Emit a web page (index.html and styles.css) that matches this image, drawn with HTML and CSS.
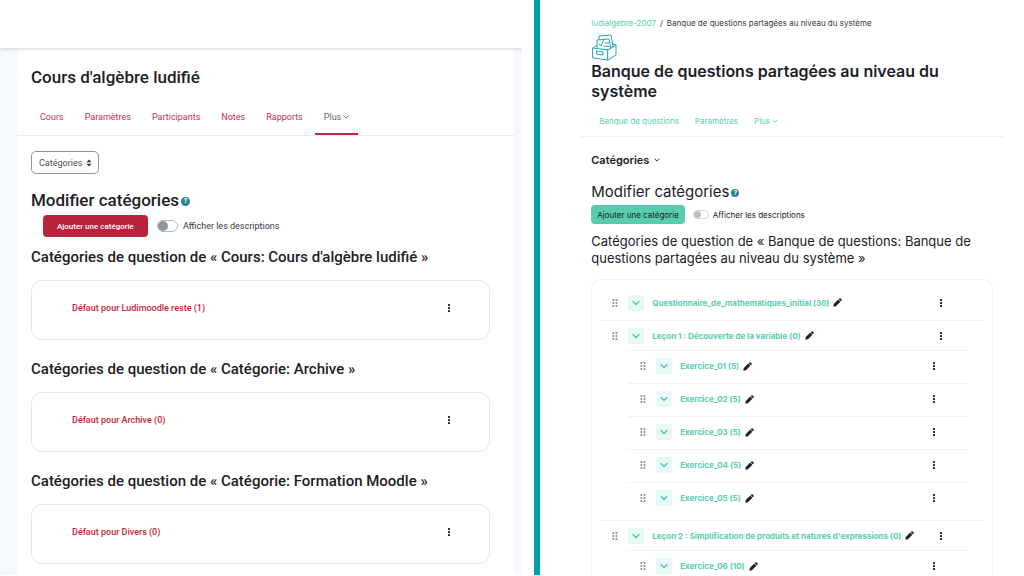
FILE: index.html
```html
<!DOCTYPE html>
<html lang="fr">
<head>
    <meta charset="UTF-8">
    <meta name="viewport" content="width=device-width, initial-scale=1.0">
    <title>Banque de questions</title>
    <link rel="stylesheet" href="styles.css">
</head>
<body>
    <!-- Shared icons -->
    <svg class="sprite" aria-hidden="true">
        <symbol id="kebab" viewBox="0 0 4 10">
            <rect x="1" y="1" width="2" height="2" rx="0.5"/>
            <rect x="1" y="4" width="2" height="2" rx="0.5"/>
            <rect x="1" y="7" width="2" height="2" rx="0.5"/>
        </symbol>
        <symbol id="grip" viewBox="0 0 6 8">
            <circle cx="1.3" cy="1" r="1"/><circle cx="4.5" cy="1" r="1"/>
            <circle cx="1.3" cy="4" r="1"/><circle cx="4.5" cy="4" r="1"/>
            <circle cx="1.3" cy="7" r="1"/><circle cx="4.5" cy="7" r="1"/>
        </symbol>
        <symbol id="chevron" viewBox="0 0 8 8">
            <path d="M1 2.5L4 5.5L7 2.5" fill="none" stroke="currentColor" stroke-width="1.2" stroke-linecap="round" stroke-linejoin="round"/>
        </symbol>
        <symbol id="pencil" viewBox="0 0 9 9">
            <path d="M0.3 8.7L0.8 6.1L5.3 1.6L7.4 3.7L2.9 8.2z"/>
            <path d="M5.7 1.2L6.5 0.4Q7.1 0 7.7 0.5L8.5 1.3Q9 1.9 8.6 2.5L7.8 3.3z"/>
        </symbol>
        <symbol id="sort" viewBox="0 0 6 8">
            <path d="M3 0.5L5.6 3.3H0.4zM3 7.5L0.4 4.7H5.6z"/>
        </symbol>
    </svg>

    <section class="site site-red">
        <div class="navbar"></div>
        <main class="page">
            <h1>Cours d'algèbre ludifié</h1>
            <nav class="tabs">
                <a href="#">Cours</a>
                <a href="#">Paramètres</a>
                <a href="#">Participants</a>
                <a href="#">Notes</a>
                <a href="#">Rapports</a>
                <a href="#" class="active">Plus <svg class="caret"><use href="#chevron"/></svg></a>
            </nav>
            <div class="content">
                <div class="picker">
                    <select aria-label="Navigation">
                        <option>Catégories</option>
                    </select>
                    <svg class="sort"><use href="#sort"/></svg>
                </div>
                <h2>Modifier catégories<button type="button" class="help" aria-label="Aide">?</button></h2>
                <div class="actions">
                    <button type="button" class="add">Ajouter une catégorie</button>
                    <label class="switch"><input type="checkbox">Afficher les descriptions</label>
                </div>

                <h3>Catégories de question de « Cours: Cours d'algèbre ludifié »</h3>
                <div class="card">
                    <a href="#">Défaut pour Ludimoodle reste (1)</a>
                    <button type="button" class="menu" aria-label="Menu"><svg><use href="#kebab"/></svg></button>
                </div>

                <h3>Catégories de question de « Catégorie: Archive »</h3>
                <div class="card">
                    <a href="#">Défaut pour Archive (0)</a>
                    <button type="button" class="menu" aria-label="Menu"><svg><use href="#kebab"/></svg></button>
                </div>

                <h3>Catégories de question de « Catégorie: Formation Moodle »</h3>
                <div class="card">
                    <a href="#">Défaut pour Divers (0)</a>
                    <button type="button" class="menu" aria-label="Menu"><svg><use href="#kebab"/></svg></button>
                </div>
            </div>
        </main>
    </section>

    <div class="divider"></div>

    <section class="site site-green">
        <header>
            <nav class="breadcrumb">
                <a href="#">ludialgebre-2007</a><span>/</span><span>Banque de questions partagées au niveau du système</span>
            </nav>
            <svg class="box-icon" viewBox="0 0 26 28">
                <g fill="#fff" stroke="#26a5b8" stroke-linejoin="round" stroke-linecap="round">
                    <path d="M8 12V3L20 2L22 12L20 18H8z"/>
                    <path d="M6 16V7L18 6L20 16z"/>
                    <path d="M2 15L17 17V27L2 25z"/>
                    <path d="M17 17L25 12V22L17 27z"/>
                    <path d="M2 15L6 12M22 11L25 12" fill="none"/>
                    <path d="M6 18L12 19V22L6 21z"/>
                    <path d="M8 11L10 13L13 6M14 10H18M13 13L18 13.500" fill="none"/>
                </g>
            </svg>
            <h1>Banque de questions partagées au niveau du système</h1>
        </header>
        <nav class="tabs">
            <a href="#">Banque de questions</a>
            <a href="#">Paramètres</a>
            <a href="#">Plus <svg class="caret"><use href="#chevron"/></svg></a>
        </nav>
        <main class="content">
            <div class="picker">
                <select aria-label="Navigation">
                    <option>Catégories</option>
                </select>
                <svg class="caret"><use href="#chevron"/></svg>
            </div>
            <h2>Modifier catégories<button type="button" class="help" aria-label="Aide">?</button></h2>
            <div class="actions">
                <button type="button" class="add">Ajouter une catégorie</button>
                <label class="switch"><input type="checkbox">Afficher les descriptions</label>
            </div>
            <h3>Catégories de question de « Banque de questions: Banque de questions partagées au niveau du système »</h3>
            <ul class="tree" id="tree"></ul>
        </main>
    </section>

    <script>
        const categories = [
            { name: 'Questionnaire_de_mathematiques_initial (36)' },
            { name: 'Leçon 1 : Découverte de la variable (0)', children: [
                { name: 'Exercice_01 (5)' },
                { name: 'Exercice_02 (5)' },
                { name: 'Exercice_03 (5)' },
                { name: 'Exercice_04 (5)' },
                { name: 'Exercice_05 (5)' }
            ] },
            { name: "Leçon 2 : Simplification de produits et natures d'expressions (0)", children: [
                { name: 'Exercice_06 (10)' }
            ] }
        ];

        // Build one level of the category tree
        function renderItems(items) {
            return items.map(item => `
                <li>
                    <div class="row">
                        <svg class="grip"><use href="#grip"/></svg>
                        <button type="button" class="toggle" aria-label="Déplier"><svg><use href="#chevron"/></svg></button>
                        <a href="#">${item.name}</a>
                        <button type="button" class="edit" aria-label="Modifier"><svg><use href="#pencil"/></svg></button>
                        <button type="button" class="menu" aria-label="Menu"><svg><use href="#kebab"/></svg></button>
                    </div>
                    ${item.children ? `<ul>${renderItems(item.children)}</ul>` : ''}
                </li>`).join('');
        }

        document.getElementById('tree').innerHTML = renderItems(categories);
    </script>
</body>
</html>
```
FILE: styles.css
```css
* {
    box-sizing: border-box;
}

body {
    display: flex;
    height: 100vh;
    margin: 0;
    overflow: hidden;
    background: #fff;
    color: #1d2125;
}

h1, h2, h3, ul {
    margin: 0;
    padding: 0;
}

a {
    text-decoration: none;
}

button, select {
    font: inherit;
    color: inherit;
    border: none;
    background: none;
    padding: 0;
    margin: 0;
    cursor: pointer;
}

svg {
    display: block;
    fill: currentColor;
}

.sprite {
    position: absolute;
    width: 0;
    height: 0;
}

.caret {
    display: inline-block;
    width: 6px;
    height: 6px;
}

.tabs {
    display: flex;
}

.picker {
    display: inline-flex;
    align-items: center;
}

.picker select {
    appearance: none;
}

.help {
    display: inline-flex;
    align-items: center;
    justify-content: center;
    border-radius: 50%;
    background: #2f8193;
    color: #fff;
    font-weight: bold;
    vertical-align: middle;
}

.actions, .switch {
    display: flex;
    align-items: center;
}

.switch input {
    appearance: none;
    margin: 0;
    border: 1px solid #b4b9c1;
    border-radius: 6px;
    background: #fff;
}

.switch input::before {
    content: "";
    display: block;
    height: 100%;
    aspect-ratio: 1;
    border-radius: 50%;
    background: #8f959e;
}

.switch input:checked::before {
    margin-left: auto;
}

.menu svg {
    width: 4px;
    height: 10px;
}

.divider {
    flex: none;
    width: 6px;
    margin: 0 0 1px 12px;
    background: #009cb0;
}

/* Left site */
.site-red {
    flex: none;
    width: 51%;
    margin-bottom: 1px;
    overflow: hidden;
    background: #f5f8fd;
    font-family: Roboto, "Liberation Sans", sans-serif;
    font-size: 9px;
}

.site-red .navbar {
    position: relative;
    height: 48px;
    background: #fff;
    box-shadow: 0 1px 4px rgba(0, 0, 0, 0.16);
}

.site-red .page {
    min-height: 100%;
    margin: 0 8px 0 17px;
    padding-top: 18px;
    background: #fff;
}

.site-red h1 {
    padding-left: 14px;
    font-size: 17px;
    line-height: 22px;
    font-weight: 500;
}

.site-red .tabs {
    gap: 3px;
    margin-top: 12px;
    padding-left: 14px;
    border-bottom: 1px solid #e9ecef;
}

.site-red .tabs a {
    padding: 10px 9px 8px;
    border-bottom: 2px solid transparent;
    color: #c92f4b;
    line-height: 15px;
}

.site-red .tabs .active {
    border-color: #c52540;
    color: #5f666d;
}

.site-red .content {
    padding: 15px 24px 0 14px;
}

.site-red .picker {
    height: 23px;
    padding: 0 6px 0 7px;
    gap: 3px;
    border: 1px solid #8f959e;
    border-radius: 5px;
    color: #495057;
}

.site-red .sort {
    width: 6px;
    height: 8px;
    color: #343a40;
}

.site-red h2 {
    margin-top: 14px;
    font-size: 17px;
    line-height: 24px;
    font-weight: 500;
}

.site-red .help {
    width: 9px;
    height: 9px;
    margin-left: 2px;
    font-size: 7px;
    line-height: 9px;
}

.site-red .actions {
    gap: 9px;
    margin: 3px 0 0 12px;
}

.site-red .add {
    height: 22px;
    padding: 0 14px;
    border-radius: 4px;
    background: #b9233c;
    color: #fff;
    font-size: 8px;
    font-weight: 500;
}

.site-red .switch {
    gap: 5px;
    color: #343a40;
}

.site-red .switch input {
    width: 21px;
    height: 12px;
}

.site-red h3 {
    margin-top: 10px;
    font-size: 15px;
    line-height: 20px;
    font-weight: 500;
}

.site-red .card {
    display: flex;
    justify-content: space-between;
    align-items: center;
    height: 60px;
    margin: 13px 0 19px;
    padding: 0 38px 4px 40px;
    border: 1px solid #e3e7ea;
    border-radius: 11px;
}

.site-red .card a {
    color: #c31f3c;
    font-weight: 500;
}

/* Right site */
.site-green {
    flex: 1;
    min-width: 0;
    padding: 17px 20px 0 40px;
    font-family: Inter, "Liberation Sans", sans-serif;
    font-size: 8px;
}

.site-green header {
    padding-left: 11px;
}

.site-green .breadcrumb {
    display: flex;
    gap: 4px;
    line-height: 12px;
    color: #343a40;
}

.site-green a {
    color: #59ceb2;
}

.box-icon {
    width: 26px;
    height: 28px;
    margin-top: 4px;
}

.site-green h1 {
    padding-right: 60px;
    font-size: 16px;
    line-height: 20px;
    font-weight: 600;
}

.site-green .tabs {
    gap: 16px;
    margin-top: 12px;
    padding: 2px 19px 9px;
    border-bottom: 1px solid #f0f2f4;
    line-height: 12px;
}

.site-green .content {
    padding: 15px 11px 0;
}

.site-green .picker {
    gap: 4px;
    font-size: 11px;
    line-height: 16px;
    font-weight: 600;
}

.site-green h2 {
    margin-top: 12px;
    font-size: 15px;
    line-height: 24px;
    font-weight: 400;
}

.site-green .help {
    width: 8px;
    height: 8px;
    margin-left: 2px;
    font-size: 6px;
    line-height: 8px;
}

.site-green .actions {
    gap: 8px;
    margin-top: 1px;
}

.site-green .add {
    height: 19px;
    padding: 0 6px;
    border-radius: 4px;
    background: #58ccae;
}

.site-green .switch {
    gap: 4px;
}

.site-green .switch input {
    width: 16px;
    height: 9px;
    border-color: #d3d6d9;
}

.site-green .switch input::before {
    background: #bfbfbf;
}

.site-green h3 {
    margin-top: 9px;
    font-size: 13px;
    line-height: 17px;
    font-weight: 400;
}

.tree {
    margin-top: 12px;
    padding: 8px;
    border: 1px solid #f0f2f4;
    border-radius: 10px;
}

.tree li {
    list-style: none;
    border-top: 1px solid #f0f2f4;
}

.tree > li {
    padding-bottom: 3px;
}

.tree > li:first-child {
    border-top: none;
}

.tree ul {
    margin: 0 17px 0 28px;
    padding-bottom: 2px;
}

.row {
    display: flex;
    align-items: center;
    height: 29px;
    padding: 0 41px 0 12px;
}

.tree ul .row {
    height: 32px;
    padding-right: 31px;
    padding-bottom: 2px;
}

.row a {
    margin-left: 8px;
    font-weight: 700;
}

.grip {
    width: 6px;
    height: 8px;
    color: #868a8e;
}

.toggle {
    display: flex;
    align-items: center;
    justify-content: center;
    width: 16px;
    height: 16px;
    margin-left: 10px;
    border-radius: 3px;
    background: #e6f9f4;
    color: #4fc6a8;
}

.toggle svg {
    width: 8px;
    height: 8px;
}

.edit {
    margin-left: 4px;
}

.edit svg {
    width: 9px;
    height: 9px;
}

.row .menu {
    margin-left: auto;
}
```
